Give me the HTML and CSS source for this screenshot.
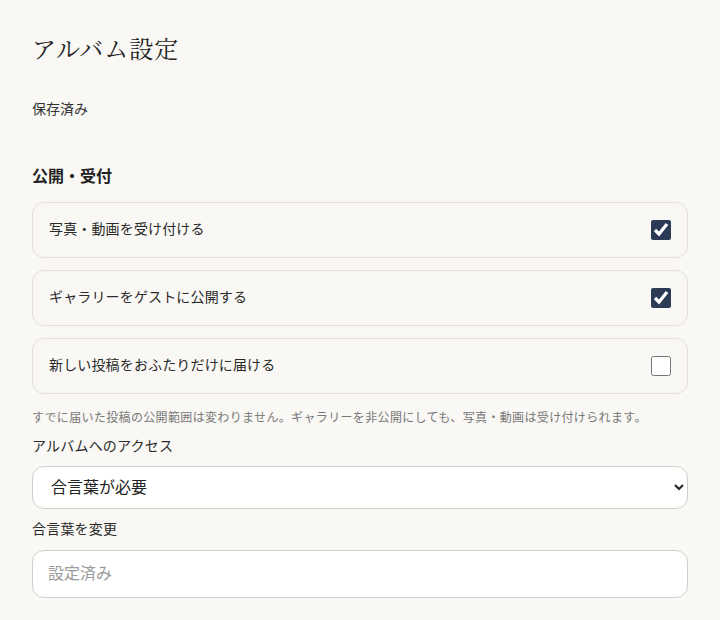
FILE: index.html
```html
<!DOCTYPE html>
<html lang="ja">
<head>
<meta charset="utf-8">
<title>アルバム設定</title>
<link rel="stylesheet" href="styles.css">
</head>
<body>
<main class="page">
  <h1 class="title">アルバム設定</h1>
  <p class="status">保存済み</p>

  <section class="section">
    <h2 class="section-title">公開・受付</h2>
    <div class="options">
      <label class="option">
        <span class="option-text">写真・動画を受け付ける</span>
        <input type="checkbox" class="check" checked>
      </label>
      <label class="option">
        <span class="option-text">ギャラリーをゲストに公開する</span>
        <input type="checkbox" class="check" checked>
      </label>
      <label class="option">
        <span class="option-text">新しい投稿をおふたりだけに届ける</span>
        <input type="checkbox" class="check">
      </label>
    </div>
    <p class="hint">すでに届いた投稿の公開範囲は変わりません。ギャラリーを非公開にしても、写真・動画は受け付けられます。</p>

    <div class="field">
      <label class="field-label" for="access">アルバムへのアクセス</label>
      <select id="access" class="select">
        <option>合言葉が必要</option>
        <option>誰でも閲覧可能</option>
      </select>
    </div>

    <div class="field field-secret">
      <label class="field-label" for="phrase">合言葉を変更</label>
      <input id="phrase" class="input" type="text" placeholder="設定済み">
    </div>
  </section>
</main>
</body>
</html>
```

FILE: styles.css
```css
html, body {
  margin: 0;
  background: #f9f8f4;
}

body {
  font-family: "Noto Sans CJK JP", "Noto Sans", sans-serif;
  color: #222;
}

.page {
  padding: 30px 32px 20px 32px;
}

.title {
  margin: 0;
  font-family: "Noto Serif CJK JP", "IPAexMincho", "Liberation Serif", serif;
  font-weight: 400;
  font-size: 24px;
  line-height: 36px;
  letter-spacing: 1px;
  color: #222;
}

.status {
  margin: 32px 0 0 0;
  font-size: 14px;
  line-height: 20px;
  color: #333;
}

.section {
  margin-top: 46px;
}

.section-title {
  margin: 0 0 16px 0;
  font-size: 16px;
  line-height: 22px;
  font-weight: 700;
}

.options {
  display: flex;
  flex-direction: column;
  gap: 12px;
}

.option {
  display: flex;
  align-items: center;
  justify-content: space-between;
  height: 56px;
  box-sizing: border-box;
  padding: 0 16px;
  border: 1px solid #e2dfd8;
  border-radius: 12px;
  font-size: 14px;
  letter-spacing: 0.15px;
  color: #2a2a2a;
}

.option-text {
  margin-bottom: 4px;
}

.check {
  width: 20px;
  height: 20px;
  margin: 0;
  accent-color: #2b3a55;
}

.hint {
  margin: 14px 0 0 0;
  font-size: 12px;
  line-height: 18px;
  letter-spacing: 0.35px;
  color: #777;
}

.field {
  display: flex;
  flex-direction: column;
  gap: 11px;
  margin-top: 9px;
}

.field-secret {
  margin-top: 9px;
  gap: 12px;
}

.field-label {
  font-size: 14px;
  line-height: 20px;
  letter-spacing: 0.2px;
  color: #2a2a2a;
}

.select {
  height: 43px;
  padding: 0 12px 3px 14px;
  border: 1px solid #d2cfc8;
  border-radius: 12px;
  background: #fff;
  font-family: inherit;
  font-size: 16px;
  color: #222;
}

.input {
  height: 48px;
  box-sizing: border-box;
  padding: 0 15px 4px 15px;
  border: 1px solid #d2cfc8;
  border-radius: 12px;
  background: #fff;
  font-family: inherit;
  font-size: 16px;
  color: #222;
}

.input::placeholder {
  color: #9a9a9a;
}
```
